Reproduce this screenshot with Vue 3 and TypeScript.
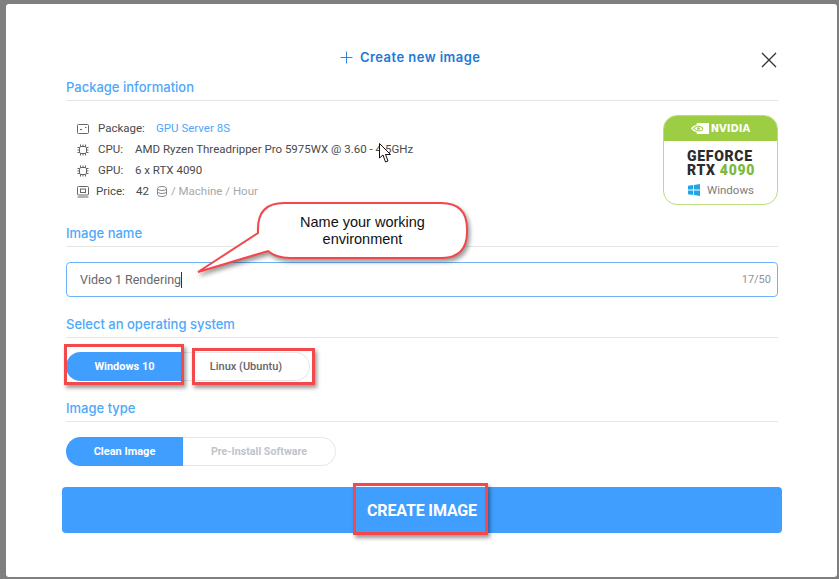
<script setup lang="ts">
const rows = [
  { icon: 'package', label: 'Package:', value: 'GPU Server 8S' },
  { icon: 'chip', label: 'CPU:', value: 'AMD Ryzen Threadripper Pro 5975WX @ 3.60 - 4.5GHz' },
  { icon: 'chip', label: 'GPU:', value: '6 x RTX 4090' },
] as const

const chipPins = [3.5, 6, 8.5]
</script>

<template>
  <div class="page">
    <div class="modal">
      <header class="header">
        <div class="title">
          <svg class="plus" width="13" height="13" viewBox="0 0 13 13">
            <path d="M6.5 0.5V12.5M0.5 6.5H12.5" stroke="#2f86e0" stroke-width="1" fill="none" />
          </svg>
          <span>Create new image</span>
        </div>
        <svg class="close" width="16" height="16" viewBox="0 0 16 16">
          <path d="M1 1L15 15M15 1L1 15" stroke="#333" stroke-width="1.3" fill="none" />
        </svg>
      </header>

      <h3 class="heading first">Package information</h3>
      <section class="info">
        <div class="rows">
          <div v-for="row in rows" :key="row.label" class="row">
            <svg class="icon" width="12" height="12" viewBox="0 0 12 12">
              <g v-if="row.icon === 'package'" fill="none" stroke="#666" stroke-width="1">
                <rect x="0.5" y="1.5" width="11" height="9" rx="1" />
                <path d="M3 6.5H5M8 4.5H9.5" />
              </g>
              <g v-else fill="none" stroke="#666" stroke-width="1">
                <rect x="2.5" y="2.5" width="7" height="7" rx="1.5" />
                <path v-for="p in chipPins" :key="p" :d="`M${p} 0.5V2.5M${p} 9.5V11.5M0.5 ${p}H2.5M9.5 ${p}H11.5`" />
              </g>
            </svg>
            <span class="label">{{ row.label }}</span>
            <span :class="['value', { link: row.icon === 'package' }]">{{ row.value }}</span>
          </div>
          <div class="row price">
            <svg class="icon" width="12" height="12" viewBox="0 0 12 12">
              <g fill="none" stroke="#666" stroke-width="1">
                <rect x="0.5" y="0.5" width="11" height="8.5" rx="1" />
                <rect x="3.5" y="3" width="5" height="3.5" />
                <path d="M0.5 11H11.5" />
              </g>
            </svg>
            <span class="label">Price:</span>
            <span class="value">42</span>
            <svg class="coins" width="10" height="11" viewBox="0 0 10 11">
              <g fill="none" stroke="#888" stroke-width="1">
                <ellipse cx="5" cy="2.5" rx="4.5" ry="2" />
                <path d="M0.5 2.5V8.5C0.5 9.6 2.5 10.5 5 10.5S9.5 9.6 9.5 8.5V2.5M0.5 5.5C0.5 6.6 2.5 7.5 5 7.5S9.5 6.6 9.5 5.5" />
              </g>
            </svg>
            <span class="unit">/ Machine / Hour</span>
          </div>
        </div>

        <div class="badge">
          <div class="badge-top">
            <svg width="18" height="11" viewBox="0 0 16 11" preserveAspectRatio="none">
              <path d="M5 0H16V11H5V9C2.5 8.6 0.8 7 0 5.5C0.8 4 2.5 2.2 5 2Z" fill="#fff" />
              <path d="M2 5.5C3.5 3.6 6 2.8 8 3.4C10 4 11 5.5 10 7C8.6 8.4 5 8.4 2 5.5Z" fill="none" stroke="#9ccd42" stroke-width="1" />
              <circle cx="6.6" cy="5.5" r="1.2" fill="#9ccd42" />
            </svg>
            <span>NVIDIA</span>
          </div>
          <div class="badge-body">
            <div class="geforce">GEFORCE<br />RTX <span class="green">4090</span></div>
            <div class="os">
              <svg width="12" height="12" viewBox="0 0 12 12">
                <path d="M0 1.8L5.2 1V5.6H0ZM6 0.9L12 0V5.6H6ZM0 6.4H5.2V11L0 10.2ZM6 6.4H12V12L6 11.1Z" fill="#1fa5e8" />
              </svg>
              <span>Windows</span>
            </div>
          </div>
        </div>
      </section>

      <h3 class="heading name">Image name</h3>
      <div class="input">
        <span class="input-text">Video 1 Rendering</span>
        <span class="caret"></span>
        <span class="count">17/50</span>
      </div>

      <h3 class="heading os-heading">Select an operating system</h3>
      <div class="toggle os-toggle">
        <div class="opt active win">Windows 10</div>
        <div class="opt linux">Linux (Ubuntu)</div>
      </div>

      <h3 class="heading type">Image type</h3>
      <div class="toggle type-toggle">
        <div class="opt active win">Clean Image</div>
        <div class="opt pre">Pre-Install Software</div>
      </div>

      <button class="create">CREATE IMAGE</button>
    </div>

    <!-- screenshot annotations drawn over the modal -->
    <svg class="callout" width="290" height="85" viewBox="190 195 290 85">
      <path
        d="M284 203H441Q467 203 467 229V232Q467 258 441 258H290Q276 258 268 251L198 272L258 233V229Q258 203 284 203Z"
        fill="#fff"
        stroke="#f2474b"
        stroke-width="2"
      />
    </svg>
    <div class="callout-text">Name your working<br />environment</div>

    <div class="mark mark-win"></div>
    <div class="mark mark-linux"></div>
    <div class="mark mark-create"></div>

    <svg class="cursor" width="13" height="20" viewBox="0 0 13 20">
      <path d="M0.5 0.5V15L4 12L6.5 19L9 18L6.5 11.5H11.5Z" fill="#fff" stroke="#111" stroke-width="1" stroke-linejoin="round" />
    </svg>
  </div>
</template>

<style scoped>
.page {
  position: relative;
  width: 839px;
  height: 579px;
  box-sizing: border-box;
  padding: 4px 2px 2px 6px;
  background: #7f7f7f;
  font-family: Roboto, 'Liberation Sans', sans-serif;
  overflow: hidden;
}

.modal {
  height: 573px;
  box-sizing: border-box;
  padding: 42px 59px 0 60px;
  background: #fff;
  border-radius: 3px;
}

.header {
  display: flex;
  align-items: flex-start;
  height: 22px;
  margin-bottom: 10px;
}

.title {
  display: flex;
  align-items: center;
  gap: 7px;
  margin-left: 274px;
  font-family: Inter, sans-serif;
  font-size: 13px;
  line-height: 22px;
  font-weight: 600;
  letter-spacing: 0.45px;
  color: #2278d4;
}

.close {
  margin: 6px 1px 0 auto;
}

.heading {
  margin: 0;
  padding-bottom: 4px;
  border-bottom: 1px solid #e6e6e6;
  font-family: Inter, sans-serif;
  font-size: 13px;
  line-height: 18px;
  font-weight: 500;
  color: #4ea8fb;
}

.heading.name {
  margin-top: 19px;
}

.heading.os-heading {
  margin-top: 18px;
}

.heading.type {
  margin-top: 18px;
}

.info {
  display: flex;
  justify-content: space-between;
  margin-top: 14px;
}

.rows {
  padding: 3px 0 0 11px;
  font-size: 11.5px;
  line-height: 21px;
  color: #4a4a4a;
}

.row {
  display: flex;
  align-items: center;
  height: 21px;
}

.icon {
  flex: none;
  margin-right: 9px;
}

.label {
  min-width: 37px;
}

.row:first-child .label {
  width: 58px;
}

.value.link {
  color: #4ea8fb;
}

.price .icon {
  margin-right: 7px;
}

.price .label {
  min-width: 40px;
}

.coins {
  margin: 0 4px 0 8px;
}

.unit {
  color: #a8a8a8;
}

.badge {
  width: 115px;
  height: 90px;
  box-sizing: border-box;
  border: 1px solid #b9dd7e;
  border-radius: 14px;
  overflow: hidden;
  background: #fff;
}

.badge-top {
  display: flex;
  align-items: center;
  justify-content: center;
  gap: 2px;
  height: 25px;
  background: #9ccd42;
  color: #fff;
  font-family: 'DejaVu Sans', sans-serif;
  font-size: 10px;
  font-weight: 700;
}

.badge-body {
  padding-top: 9px;
}

.geforce {
  margin-left: 23px;
  font-family: Roboto, sans-serif;
  font-size: 14px;
  line-height: 13.5px;
  font-weight: 900;
  letter-spacing: 0.7px;
  color: #2b2b2b;
}

.green {
  color: #7cb93a;
}

.os {
  display: flex;
  align-items: center;
  gap: 7px;
  margin: 6px 0 0 24px;
  font-size: 11.5px;
  line-height: 14px;
  color: #7d7d7d;
}

.input {
  display: flex;
  align-items: center;
  height: 35px;
  margin-top: 15px;
  padding: 0 6px 0 13px;
  box-sizing: border-box;
  border: 1px solid #6cb3fb;
  border-radius: 4px;
  font-size: 12.5px;
  color: #66686c;
}

.caret {
  width: 1px;
  height: 16px;
  background: #333;
}

.count {
  margin-left: auto;
  font-size: 11px;
  color: #909399;
}

.toggle {
  display: flex;
  height: 29px;
  font-size: 11px;
  font-weight: 700;
}

.os-toggle {
  width: 244px;
  margin-top: 14px;
}

.type-toggle {
  width: 270px;
  margin-top: 15px;
}

.opt {
  display: flex;
  align-items: center;
  justify-content: center;
  box-sizing: border-box;
}

.active {
  background: #409eff;
  color: #fff;
}

.win {
  width: 117px;
  border-radius: 15px 0 0 15px;
}

.linux,
.pre {
  flex: 1;
  border: 1px solid #e6e8ec;
  border-left: 0;
  border-radius: 0 15px 15px 0;
}

.linux {
  color: #666;
  font-weight: 500;
}

.pre {
  color: #c0c4cc;
  font-size: 10.7px;
}

.create {
  display: block;
  width: 720px;
  height: 46px;
  margin: 21px 0 0 -4px;
  padding: 0;
  border: 0;
  border-radius: 4px;
  background: #409eff;
  color: #fff;
  font-family: Roboto, sans-serif;
  font-size: 16px;
  font-weight: 700;
  letter-spacing: -0.15px;
}

.callout {
  position: absolute;
  left: 190px;
  top: 195px;
  filter: drop-shadow(2px 3px 2px rgba(0, 0, 0, 0.4));
}

.callout-text {
  position: absolute;
  left: 258px;
  top: 214px;
  width: 209px;
  font-family: 'Liberation Sans', sans-serif;
  font-size: 14.5px;
  line-height: 17px;
  text-align: center;
  color: #111;
}

.mark {
  position: absolute;
  box-sizing: border-box;
  border: 3px solid #f4484b;
  box-shadow: 2px 3px 4px rgba(0, 0, 0, 0.4);
}

.mark-win {
  left: 64px;
  top: 344px;
  width: 120px;
  height: 41px;
}

.mark-linux {
  left: 192px;
  top: 348px;
  width: 123px;
  height: 37px;
}

.mark-create {
  left: 353px;
  top: 483px;
  width: 135px;
  height: 52px;
}

.cursor {
  position: absolute;
  left: 379px;
  top: 143px;
}
</style>

<style>
html,
body {
  margin: 0;
  background: #7f7f7f;
}
</style>
